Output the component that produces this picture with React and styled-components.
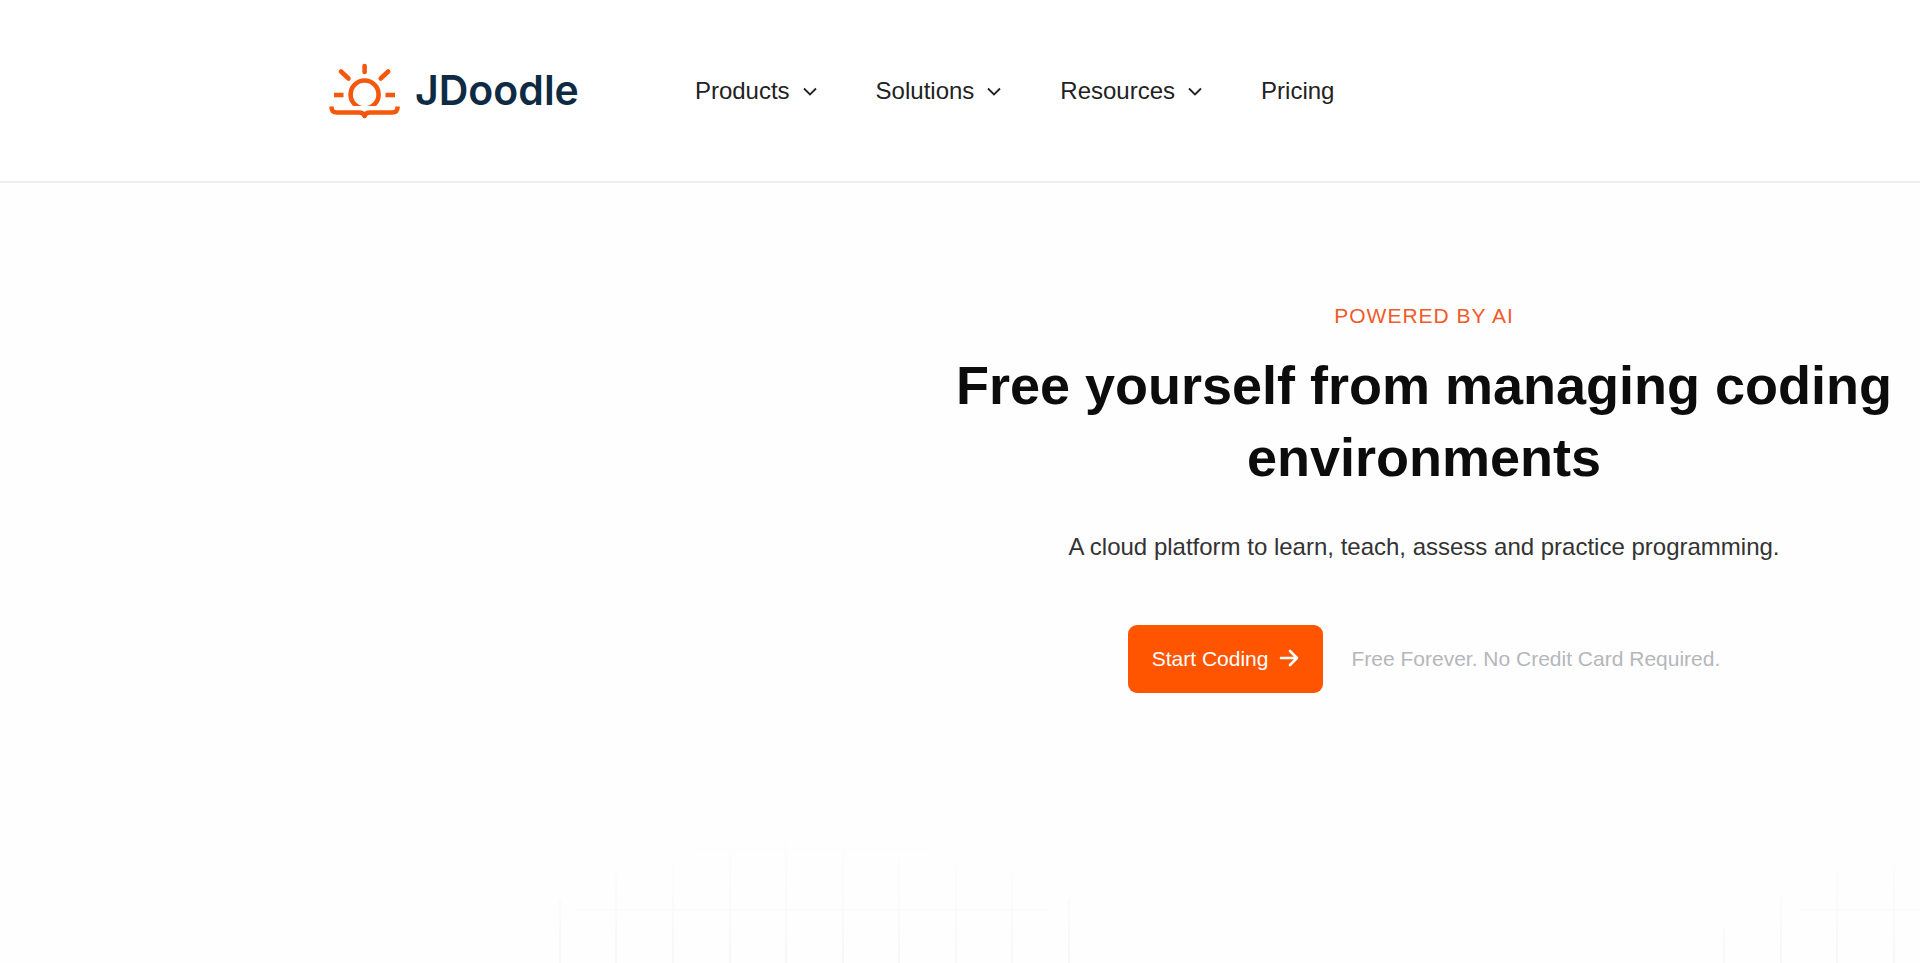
import React from "react";
import styled, { createGlobalStyle } from "styled-components";

const GlobalStyle = createGlobalStyle`
  *, *::before, *::after { box-sizing: border-box; }
  body {
    margin: 0;
    background: #fefefe;
    color: #222;
    font-family: "Liberation Sans", Arial, sans-serif;
  }
`;

const Header = styled.header`
  display: flex;
  align-items: center;
  gap: 116px;
  padding: 56px 24px 56px 328px;
  border-bottom: 2px solid #ededed;
  background: #fff;
`;

const Brand = styled.a`
  display: flex;
  align-items: center;
  gap: 15px;
  color: #0f2a43;
  font: 600 41px/69px Inter, sans-serif;
  text-decoration: none;
`;

const Nav = styled.nav`
  display: flex;
  align-items: center;
  gap: 58px;
`;

const navItem = `
  display: flex;
  align-items: center;
  gap: 12px;
  padding: 0;
  border: 0;
  background: none;
  color: #222;
  font: 400 24px/36px "Liberation Sans", Arial, sans-serif;
  text-decoration: none;
  cursor: pointer;
`;

const MenuButton = styled.button`${navItem}`;
const NavLink = styled.a`${navItem}`;

const Hero = styled.section`
  display: grid;
  grid-template-columns: 29fr 31fr;
  padding: 116px 0 148px;
`;

const Copy = styled.div`
  grid-column: 2;
  display: flex;
  flex-direction: column;
  align-items: center;
  padding: 0 16px;
  text-align: center;
`;

const Eyebrow = styled.p`
  margin: 0;
  color: #f15a29;
  font-size: 21px;
  line-height: 34px;
  letter-spacing: 1px;
  text-transform: uppercase;
`;

const Title = styled.h1`
  margin: 16px 0 36px;
  color: #0c0c0c;
  font-size: 54px;
  line-height: 72px;
`;

const Lead = styled.p`
  margin: 0 0 60px;
  color: #333;
  font-size: 24px;
  line-height: 36px;
`;

const Actions = styled.div`
  display: flex;
  align-items: center;
  gap: 28px;
`;

const StartButton = styled.button`
  display: flex;
  align-items: center;
  gap: 11px;
  height: 68px;
  padding: 0 24px;
  border: 0;
  border-radius: 9px;
  background: #ff5400;
  color: #fff;
  font: 400 21px/32px "Liberation Sans", Arial, sans-serif;
  cursor: pointer;
`;

const Note = styled.span`
  color: #b5b7ba;
  font-size: 21px;
  line-height: 32px;
`;

const GridArt = styled.svg`
  display: block;
  width: 100%;
  height: auto;
`;

const Sunrise = () => (
  <svg width="72" height="56" viewBox="0 0 72 56" fill="none" stroke="#f4580c" strokeWidth="4.6" strokeLinejoin="round" aria-hidden="true">
    <clipPath id="horizon">
      <rect width="72" height="43" />
    </clipPath>
    <path strokeLinecap="round" d="M36.600 3V9M13 8.500L20.500 15.500M60.200 8.500L52.700 15.500" />
    <path d="M6 32H15.500M57.500 32H67" />
    <circle cx="36.600" cy="31.500" r="14" clipPath="url(#horizon)" />
    <path d="M3.500 43.500C3.500 48 5 49.500 9 49.500H31C34 49.500 36 51 36.600 53C37.200 51 39 49.500 42 49.500H64C68 49.500 69.600 48 69.600 43.500" />
  </svg>
);

const Chevron = () => (
  <svg width="16" height="16" viewBox="0 0 16 16" fill="none" stroke="#222" strokeWidth="1.800" aria-hidden="true">
    <path d="M2 5.500L8 11.500L14 5.500" />
  </svg>
);

const Arrow = () => (
  <svg width="20" height="20" viewBox="0 0 20 20" fill="none" stroke="#fff" strokeWidth="2.600" strokeLinecap="round" strokeLinejoin="round" aria-hidden="true">
    <path d="M2 9H18M11 2L18 9L11 16" />
  </svg>
);

const verticals = [
  [559, 58], [615, 32], [672, 23], [729, 8], [785, 0], [842, 0],
  [898, 16], [955, 24], [1011, 32], [1068, 58],
  [1723, 88], [1780, 56], [1836, 32], [1893, 24],
];

const menus = ["Products", "Solutions", "Resources"];

export default function App() {
  return (
    <>
      <GlobalStyle />
      <Header>
        <Brand href="#">
          <Sunrise />
          JDoodle
        </Brand>
        <Nav aria-label="Main">
          {menus.map((name) => (
            <MenuButton key={name} type="button">
              {name}
              <Chevron />
            </MenuButton>
          ))}
          <NavLink href="#pricing">Pricing</NavLink>
        </Nav>
      </Header>
      <main>
        <Hero>
          <Copy>
            <Eyebrow>Powered by AI</Eyebrow>
            <Title>Free yourself from managing coding environments</Title>
            <Lead>A cloud platform to learn, teach, assess and practice programming.</Lead>
            <Actions>
              <StartButton type="button">
                Start Coding
                <Arrow />
              </StartButton>
              <Note>Free Forever. No Credit Card Required.</Note>
            </Actions>
          </Copy>
        </Hero>
        <GridArt viewBox="0 0 1920 122" aria-hidden="true">
          <defs>
            <linearGradient id="fade" gradientUnits="userSpaceOnUse" x1="0" y1="0" x2="0" y2="122">
              <stop offset="0" stopColor="#fdfdfd" />
              <stop offset="1" stopColor="#f8f8f8" />
            </linearGradient>
          </defs>
          {verticals.map(([x, top]) => (
            <rect key={x} x={x} y={top} width="2" height={122 - top} fill="url(#fade)" />
          ))}
          <rect x="690" y="8" width="245" height="2" fill="#fdfdfd" />
          <rect x="577" y="68" width="470" height="2" fill="#fbfbfb" />
          <rect x="1800" y="68" width="120" height="2" fill="#fbfbfb" />
        </GridArt>
      </main>
    </>
  );
}
